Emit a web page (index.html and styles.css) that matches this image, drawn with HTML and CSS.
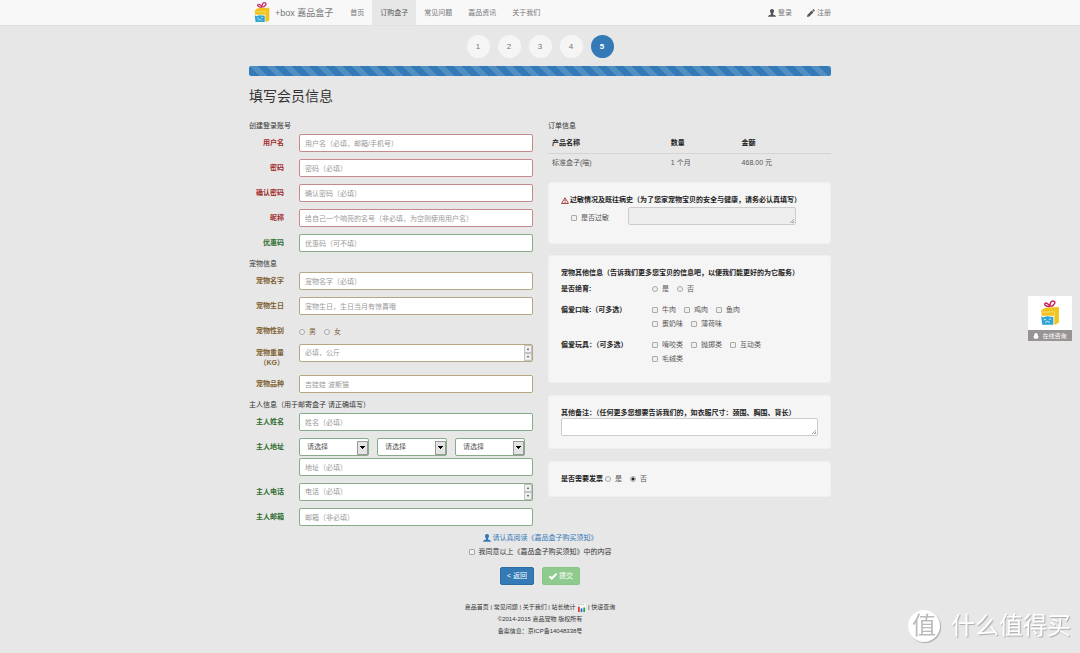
FILE: index.html
```html
<!DOCTYPE html>
<html lang="zh-CN">
<head>
<meta charset="utf-8">
<meta name="viewport" content="width=device-width, initial-scale=1">
<title>+box 嘉品盒子 - 订购盒子</title>
<link rel="stylesheet" href="styles.css">
</head>
<body>
<svg class="sprite" aria-hidden="true">
  <symbol id="gift" viewBox="0 0 18 23">
    <path d="M8.500 6C5 5.500 3.500 4 4.500 3s3.500 0 4.500 3c0-3 .5-5.500 3-5.200s1.500 3.200-2 5" fill="none" stroke="#c9235f" stroke-width="1.300"/>
    <path d="M1 9.500 3 7.500 6.500 6.500 17 6.200V20l-3 2-1.500-1V14H1.500z" fill="#f2c31c"/>
    <path d="M1 10.800 12 10.500M13 9.500V20.500" stroke="#fbe28b" stroke-width=".7" fill="none"/>
    <path d="M1 14.500 3 15.500 6 14.500 12 15V22H2z" fill="#2fa3d4"/>
    <path d="M3.500 17.500h2M8 17h2M4.500 20l2-1 2.500 1" stroke="#d8f1fb" stroke-width=".8" fill="none"/>
  </symbol>
  <symbol id="user" viewBox="0 0 16 16">
    <path d="M8 0C5 0 3.800 2 4 4.500c.1 2 .8 3.700 2 4.700v1.600C4 11.600 0 12 0 15.500h16c0-3.500-4-3.900-6-4.700V9.200c1.200-1 1.900-2.700 2-4.700C12.200 2 11 0 8 0z" fill="currentColor"/>
  </symbol>
  <symbol id="pencil" viewBox="0 0 16 16">
    <path d="M12.500 0 16 3.500 14 5.500 10.500 2zM9.500 3 13 6.500 4.500 15 0 16l1-4.500z" fill="currentColor"/>
  </symbol>
</svg>

<header class="navbar">
  <div class="container navbar-inner">
    <a class="brand" href="#"><svg class="brand-logo" aria-hidden="true"><use href="#gift"/></svg><span>+box 嘉品盒子</span></a>
    <nav class="nav">
      <a href="#">首页</a>
      <a href="#" class="active" aria-current="page">订购盒子</a>
      <a href="#">常见问题</a>
      <a href="#">嘉品资讯</a>
      <a href="#">关于我们</a>
    </nav>
    <nav class="account">
      <a href="#"><svg class="icon" aria-hidden="true"><use href="#user"/></svg>登录</a>
      <a href="#"><svg class="icon" aria-hidden="true"><use href="#pencil"/></svg>注册</a>
    </nav>
  </div>
</header>

<main class="container">
  <ol class="steps">
    <li>1</li><li>2</li><li>3</li><li>4</li><li class="current" aria-current="step">5</li>
  </ol>
  <div class="progress" role="progressbar" aria-label="进度" aria-valuenow="100"></div>
  <h1>填写会员信息</h1>

  <form>
    <div class="columns">
      <div class="member">
        <section class="group error">
          <h2>创建登录账号</h2>
          <div class="row"><label for="username">用户名</label><input class="control" id="username" type="text" placeholder="用户名（必填，邮箱/手机号）"></div>
          <div class="row"><label for="password">密码</label><input class="control" id="password" type="password" placeholder="密码（必填）"></div>
          <div class="row"><label for="confirm">确认密码</label><input class="control" id="confirm" type="password" placeholder="确认密码（必填）"></div>
          <div class="row"><label for="nickname">昵称</label><input class="control" id="nickname" type="text" placeholder="给自己一个响亮的名号（非必填，为空则使用用户名）"></div>
          <div class="row success"><label for="coupon">优惠码</label><input class="control" id="coupon" type="text" placeholder="优惠码（可不填）"></div>
        </section>

        <section class="group warning">
          <h2>宠物信息</h2>
          <div class="row"><label for="petname">宠物名字</label><input class="control" id="petname" type="text" placeholder="宠物名字（必填）"></div>
          <div class="row"><label for="birthday">宠物生日</label><input class="control" id="birthday" type="text" placeholder="宠物生日，生日当月有惊喜哦"></div>
          <div class="row" role="radiogroup" aria-labelledby="sex"><span class="row-label" id="sex">宠物性别</span>
            <div class="choices sex">
              <label><input type="radio" name="sex">男</label>
              <label><input type="radio" name="sex">女</label>
            </div>
          </div>
          <div class="row"><label for="weight">宠物重量（KG）</label>
            <div class="control number"><input id="weight" type="text" inputmode="numeric" placeholder="必填，公斤"><span class="spinner"><button type="button" aria-label="增加"></button><button type="button" aria-label="减少" class="down"></button></span></div>
          </div>
          <div class="row"><label for="breed">宠物品种</label><input class="control" id="breed" type="text" placeholder="吉娃娃 波斯猫"></div>
        </section>

        <section class="group success">
          <h2>主人信息（用于邮寄盒子 请正确填写）</h2>
          <div class="row"><label for="owner">主人姓名</label><input class="control" id="owner" type="text" placeholder="姓名（必填）"></div>
          <div class="row"><label for="address">主人地址</label>
            <div class="address">
              <div class="regions">
                <span class="select"><select class="control" aria-label="省"><option>请选择</option></select></span>
                <span class="select"><select class="control" aria-label="市"><option>请选择</option></select></span>
                <span class="select"><select class="control" aria-label="区"><option>请选择</option></select></span>
              </div>
              <input class="control" id="address" type="text" placeholder="地址（必填）">
            </div>
          </div>
          <div class="row"><label for="phone">主人电话</label>
            <div class="control number"><input id="phone" type="text" inputmode="numeric" placeholder="电话（必填）"><span class="spinner"><button type="button" aria-label="增加"></button><button type="button" aria-label="减少" class="down"></button></span></div>
          </div>
          <div class="row"><label for="email">主人邮箱</label><input class="control" id="email" type="text" placeholder="邮箱（非必填）"></div>
        </section>
      </div>

      <div class="order">
        <h2>订单信息</h2>
        <table>
          <thead><tr><th class="product">产品名称</th><th class="amount">数量</th><th>金额</th></tr></thead>
          <tbody><tr><td>标准盒子(喵)</td><td>1 个月</td><td>468.00 元</td></tr></tbody>
        </table>

        <section class="well allergy">
          <h3><svg class="warn" viewBox="0 0 16 14" aria-hidden="true"><path d="M8 1.500 15 13H1zM8 5v4M8 10v2" fill="none" stroke="#a94442" stroke-width="2"/></svg><label for="allergy-note">过敏情况及既往病史（为了您家宠物宝贝的安全与健康，请务必认真填写）</label></h3>
          <div class="allergy-row">
            <div class="choices"><label><input type="checkbox">是否过敏</label></div>
            <span class="area"><textarea id="allergy-note" disabled></textarea></span>
          </div>
        </section>

        <section class="well extra">
          <h3>宠物其他信息（告诉我们更多您宝贝的信息吧，以便我们能更好的为它服务）</h3>
          <div class="question" role="group" aria-labelledby="q1"><b id="q1">是否绝育:</b>
            <div class="choices">
              <label><input type="radio" name="neutered">是</label>
              <label><input type="radio" name="neutered">否</label>
            </div>
          </div>
          <div class="question" role="group" aria-labelledby="q2"><b id="q2">偏爱口味:（可多选）</b>
            <div class="choices">
              <label><input type="checkbox">牛肉</label>
              <label><input type="checkbox">鸡肉</label>
              <label><input type="checkbox">鱼肉</label>
              <label><input type="checkbox">蛋奶味</label>
              <label><input type="checkbox">薄荷味</label>
            </div>
          </div>
          <div class="question" role="group" aria-labelledby="q3"><b id="q3">偏爱玩具：（可多选）</b>
            <div class="choices">
              <label><input type="checkbox">啃咬类</label>
              <label><input type="checkbox">抛掷类</label>
              <label><input type="checkbox">互动类</label>
              <label><input type="checkbox">毛绒类</label>
            </div>
          </div>
        </section>

        <section class="well">
          <h3><label for="remark">其他备注：（任何更多您想要告诉我们的，如衣服尺寸：颈围、胸围、背长）</label></h3>
          <span class="area"><textarea id="remark"></textarea></span>
        </section>

        <section class="well invoice" role="radiogroup" aria-labelledby="invoice">
          <b id="invoice">是否需要发票</b>
          <div class="choices">
            <label><input type="radio" name="invoice">是</label>
            <label><input type="radio" name="invoice" checked>否</label>
          </div>
        </section>
      </div>
    </div>

    <div class="agreement">
      <a href="#"><svg class="icon" aria-hidden="true"><use href="#user"/></svg>请认真阅读《嘉品盒子购买须知》</a>
      <div class="choices"><label><input type="checkbox">我同意以上《嘉品盒子购买须知》中的内容</label></div>
    </div>
    <div class="actions">
      <button type="button" class="btn primary">&lt; 返回</button>
      <button type="submit" class="btn submit"><svg class="icon" viewBox="0 0 16 16" aria-hidden="true"><path d="M1 8.500 5.500 13 15 3.500" fill="none" stroke="currentColor" stroke-width="4"/></svg>提交</button>
    </div>
  </form>
</main>

<footer class="footer">
  <p><a href="#">嘉品首页</a> | <a href="#">常见问题</a> | <a href="#">关于我们</a> | <a href="#">站长统计</a> <svg class="chart" viewBox="0 0 10 10" aria-hidden="true"><path d="M0 0h10v10H0z" fill="#f6f6f6"/><path d="M1 1.500h8" stroke="#999" stroke-dasharray="1 1"/><path d="M2 4v6" stroke="#d33" stroke-width="2"/><path d="M5 6v4" stroke="#36c" stroke-width="2"/><path d="M8 5v5" stroke="#2a4" stroke-width="2"/></svg> | <a href="#">快递查询</a></p>
  <p>©2014-2015 嘉品宠物 版权所有</p>
  <p>备案信息：京ICP备14048338号</p>
</footer>

<a class="chat" href="#">
  <span class="chat-logo"><svg aria-hidden="true"><use href="#gift"/></svg></span>
  <span class="chat-label"><svg viewBox="0 0 12 12" aria-hidden="true"><path d="M6 0C3 0 2.500 2.500 2.500 5L.5 8.500l1.500.5 1 2.500h6l1-2.500 1.500-.5-2-3.500C9.500 2.500 9 0 6 0z" fill="#fff"/></svg>在线咨询</span>
</a>

<div class="watermark"><span class="seal">值</span><span>什么值得买</span></div>
</body>
</html>
```

FILE: styles.css
```css
* { box-sizing: border-box; }

body {
  margin: 0;
  background: #e7e7e7;
  color: #333;
  font: 7px/10px "Liberation Sans", "Noto Sans CJK SC", sans-serif;
}

a { color: inherit; text-decoration: none; }
h1, h2, h3, p, ol { margin: 0; padding: 0; }
input, select, textarea, button { font: inherit; color: inherit; margin: 0; }

.sprite { display: none; }
.container { max-width: 582px; margin: 0 auto; }
.icon { width: 8px; height: 8px; flex: none; }

/* Navigation */
.navbar { background: #f8f8f8; border-bottom: 1px solid #e0e0e0; color: #777; }
.navbar-inner { display: flex; align-items: stretch; height: 25px; }
.brand { display: flex; align-items: center; gap: 4px; padding: 0 9px 0 4px; font-size: 9px; }
.brand-logo { width: 18px; height: 21px; }
.nav, .account { display: flex; }
.nav a { display: flex; align-items: center; padding: 0 8px; }
.nav .active { background: #e7e7e7; color: #555; }
.account { margin-left: auto; gap: 15px; }
.account a { display: flex; align-items: center; gap: 2px; }
.account .icon { color: #555; }

/* Progress */
.steps { display: flex; justify-content: center; gap: 8px; padding: 9px 0 8px; list-style: none; }
.steps li {
  width: 23px; height: 23px; border-radius: 50%;
  background: #f5f5f5; color: #777;
  font-size: 8px; line-height: 23px; text-align: center;
}
.steps .current { background: #337ab7; color: #fff; font-weight: bold; }
.progress {
  height: 10px; border-radius: 2px;
  background: #337ab7 linear-gradient(45deg, rgba(255,255,255,.15) 25%, transparent 25%, transparent 50%, rgba(255,255,255,.15) 50%, rgba(255,255,255,.15) 75%, transparent 75%) 0 0 / 17px 17px;
}
h1 { padding: 10px 0 13px; font-size: 14px; line-height: 20px; font-weight: normal; }

/* Form */
.columns { display: grid; grid-template-columns: 284fr 283fr; gap: 15px; }
h2 { margin-bottom: 2px; font-size: 7px; line-height: 13px; font-weight: normal; }
.group { margin-bottom: 5px; --line: #b8a584; --text: #7d6030; }
.group:last-child { margin-bottom: 0; }
.error { --line: #c48b8a; --text: #a02c2c; }
.success { --line: #86ab86; --text: #2f6d30; }
.row { display: grid; grid-template-columns: 35px 1fr; gap: 15px; min-height: 15px; margin-bottom: 7px; }
.row:last-child { margin-bottom: 0; }
.row > label, .row-label { padding-top: 4px; color: var(--text); font-weight: bold; text-align: right; }
.control {
  width: 100%; height: 18px; padding: 0 5px;
  border: 1px solid var(--line); border-radius: 2px; background: #fff;
}
::placeholder { color: #999; opacity: 1; }
.number { display: flex; padding-right: 0; }
.number input { flex: 1; min-width: 0; padding: 0; border: 0; background: none; }
.spinner { display: grid; width: 8px; }
.spinner button { display: grid; place-items: center; padding: 0; border: 1px solid #c4c4c4; background: #eee; }
.spinner button::before { content: ""; border: 1px solid transparent; border-top: 0; border-bottom: 2px solid #446; }
.spinner .down::before { transform: rotate(180deg); }
.regions { display: grid; grid-template-columns: repeat(3, 70px); gap: 8px; margin-bottom: 2px; }
.select { position: relative; }
.select .control { display: block; appearance: none; padding: 0 7px; color: #555; }
.select::after {
  content: ""; position: absolute; top: 3px; right: 1px; width: 9px; height: 12px; border: 1px solid #999;
  background: linear-gradient(#000, #000) center 4px / 5px 1px no-repeat, linear-gradient(#000, #000) center 5px / 3px 1px no-repeat, linear-gradient(#000, #000) center 6px / 1px 1px no-repeat, #e4e4e4;
  pointer-events: none;
}

.choices { display: flex; flex-wrap: wrap; gap: 4px 8px; color: #555; }
.choices label { display: flex; align-items: center; gap: 4px; }
.choices input { appearance: none; width: 6px; height: 6px; border: 1px solid #aaa; border-radius: 1px; background: #f0f0f0; }
.choices input[type="radio"] { border-radius: 50%; }
.choices input:checked { background: radial-gradient(circle, #222 1px, #f0f0f0 2px); }
.sex { padding-top: 4px; color: var(--text); }

/* Order */
table { width: 100%; margin-bottom: 11px; border-collapse: collapse; table-layout: fixed; }
th, td { height: 19px; padding: 0 4px; text-align: left; }
th { border-bottom: 1px solid #d4d4d4; color: #222; }
td { color: #555; }
.product { width: 42%; }
.amount { width: 25%; }

.well { margin-bottom: 12px; padding: 12px; border: 1px solid #f0f0f0; border-radius: 3px; background: #f5f5f5; }
.well:last-child { margin-bottom: 0; }
.well h3, .well b { color: #222; font-size: 7px; font-weight: bold; }
.well h3 { display: flex; align-items: center; gap: 1px; }
.warn { width: 8px; height: 7px; }
.area { position: relative; display: block; }
.area::after {
  content: ""; position: absolute; right: 2px; bottom: 2px; width: 4px; height: 4px;
  background: linear-gradient(135deg, transparent 50%, #aaa 50%, #aaa 60%, transparent 60%, transparent 75%, #aaa 75%);
  pointer-events: none;
}
textarea { display: block; width: 100%; height: 18px; border: 1px solid #ccc; border-radius: 2px; background: #fff; resize: none; }
textarea:disabled { background: #eee; }
.order table { margin-bottom: 10px; }
.allergy { margin-bottom: 11px; padding-bottom: 18px; }
.allergy-row { display: grid; grid-template-columns: 48px 168px; justify-content: space-between; padding: 2px 22px 0 10px; }
.allergy-row .choices { padding-top: 4px; }
.extra { padding-bottom: 18px; }
.question { display: grid; grid-template-columns: 91px 120px; margin-top: 11px; }
h3 + .question { margin-top: 6px; }
.invoice { display: flex; gap: 2px; }

/* Agreement and buttons */
.agreement { display: grid; justify-items: center; gap: 4px; padding-top: 7px; }
.agreement a { display: flex; align-items: center; gap: 2px; color: #337ab7; }
.agreement .choices { color: #333; }
.actions { display: flex; justify-content: center; gap: 8px; padding-top: 10px; }
.btn { display: flex; align-items: center; gap: 2px; height: 18px; padding: 0 6px; border: 1px solid; border-radius: 2px; color: #fff; }
.primary { background: #337ab7; border-color: #2e6da4; }
.submit { background: #8fcb8f; border-color: #88c588; }

.footer { padding-top: 16px; font-size: 6px; line-height: 12px; text-align: center; }
.chart { width: 9px; height: 9px; vertical-align: middle; }

/* Floating chat entry */
.chat { position: fixed; top: 296px; right: 8px; width: 44px; background: #fff; }
.chat-logo { display: grid; place-items: center; height: 34px; }
.chat-logo svg { width: 20px; height: 26px; }
.chat-label { display: flex; align-items: center; justify-content: center; gap: 3px; height: 11px; background: #999494; color: #fff; font-size: 6px; }
.chat-label svg { width: 6px; height: 6px; }

.watermark {
  position: fixed; right: 9px; bottom: 10px; display: flex; align-items: center; gap: 11px;
  color: #fff; font-size: 24px; line-height: 34px; text-shadow: 1px 1px 1px #aaa;
}
.seal {
  width: 32px; height: 32px; border-radius: 50%; background: #fff; color: #bbb;
  line-height: 32px; text-align: center; text-shadow: none; box-shadow: 1px 1px 1px #aaa;
}
```
